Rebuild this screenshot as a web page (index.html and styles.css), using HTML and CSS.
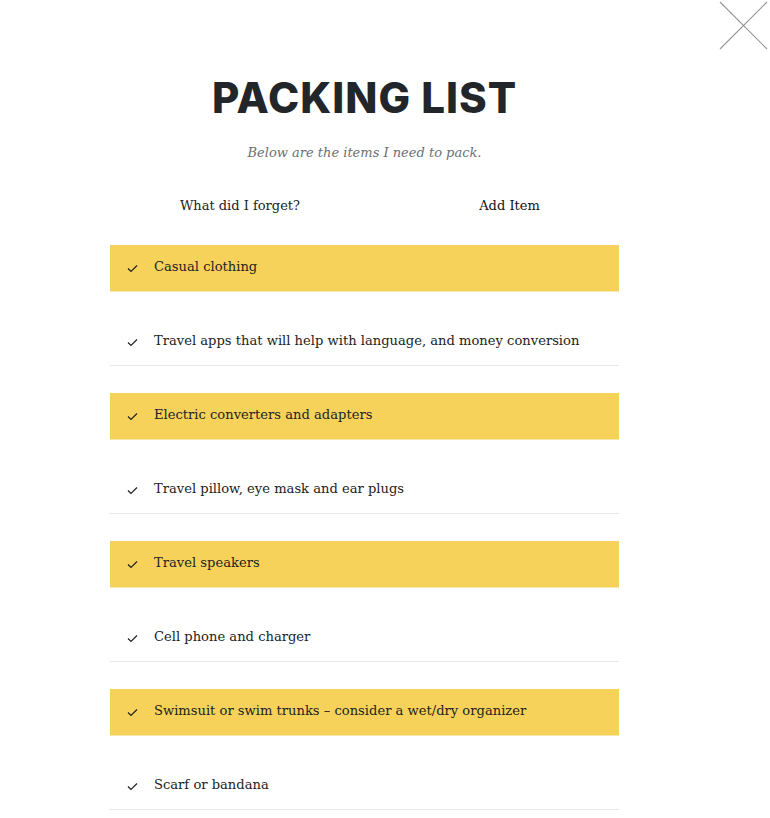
FILE: index.html
```html
<!DOCTYPE html>
<html>
<head>
<meta charset="utf-8">
<link rel="stylesheet" href="styles.css">
</head>
<body>
<button class="close" aria-label="Close">
  <svg width="50" height="52" viewBox="0 0 50 52"><path d="M1 2 L48 49 M48 2 L1 49" stroke="#999" stroke-width="1.2" fill="none"/></svg>
</button>
<main class="wrap">
  <h1 class="title">PACKING LIST</h1>
  <p class="sub">Below are the items I need to pack.</p>
  <form class="form">
    <input class="field" type="text" placeholder="What did I forget?">
    <button class="add" type="button">Add Item</button>
  </form>
  <ul class="list">
    <li class="item done"><svg class="chk" width="11" height="9" viewBox="0 0 11 9"><path d="M1 4.5 L4 7.5 L10 1.5" stroke="#222" stroke-width="1.2" fill="none"/></svg><span>Casual clothing</span></li>
    <li class="item"><svg class="chk" width="11" height="9" viewBox="0 0 11 9"><path d="M1 4.5 L4 7.5 L10 1.5" stroke="#222" stroke-width="1.2" fill="none"/></svg><span>Travel apps that will help with language, and money conversion</span></li>
    <li class="item done"><svg class="chk" width="11" height="9" viewBox="0 0 11 9"><path d="M1 4.5 L4 7.5 L10 1.5" stroke="#222" stroke-width="1.2" fill="none"/></svg><span>Electric converters and adapters</span></li>
    <li class="item"><svg class="chk" width="11" height="9" viewBox="0 0 11 9"><path d="M1 4.5 L4 7.5 L10 1.5" stroke="#222" stroke-width="1.2" fill="none"/></svg><span>Travel pillow, eye mask and ear plugs</span></li>
    <li class="item done"><svg class="chk" width="11" height="9" viewBox="0 0 11 9"><path d="M1 4.5 L4 7.5 L10 1.5" stroke="#222" stroke-width="1.2" fill="none"/></svg><span>Travel speakers</span></li>
    <li class="item"><svg class="chk" width="11" height="9" viewBox="0 0 11 9"><path d="M1 4.5 L4 7.5 L10 1.5" stroke="#222" stroke-width="1.2" fill="none"/></svg><span>Cell phone and charger</span></li>
    <li class="item done"><svg class="chk" width="11" height="9" viewBox="0 0 11 9"><path d="M1 4.5 L4 7.5 L10 1.5" stroke="#222" stroke-width="1.2" fill="none"/></svg><span>Swimsuit or swim trunks – consider a wet/dry organizer</span></li>
    <li class="item"><svg class="chk" width="11" height="9" viewBox="0 0 11 9"><path d="M1 4.5 L4 7.5 L10 1.5" stroke="#222" stroke-width="1.2" fill="none"/></svg><span>Scarf or bandana</span></li>
  </ul>
</main>
</body>
</html>
```

FILE: styles.css
```css
html, body {
  margin: 0;
  padding: 0;
  background: #fff;
  font-family: "DejaVu Serif", serif;
  color: #222;
  overflow: hidden;
}
.close {
  position: absolute;
  top: 0;
  right: 1px;
  border: 0;
  background: none;
  padding: 0;
  line-height: 0;
}
.wrap {
  width: 509px;
  margin: 0 0 0 110px;
  padding-top: 73px;
}
.title {
  margin: 0;
  text-align: center;
  font-family: Inter, "Open Sans", sans-serif;
  font-weight: 800;
  font-size: 42px;
  line-height: 50px;
  letter-spacing: 1px;
  color: #222529;
}
.sub {
  margin: 20px 0 0;
  text-align: center;
  font-style: italic;
  font-size: 13px;
  line-height: 20px;
  color: #6b6f75;
}
.form {
  display: flex;
  margin-top: 30px;
  height: 24px;
  align-items: center;
}
.field {
  width: 260px;
  border: 0;
  outline: none;
  padding: 0;
  text-align: center;
  font-family: "DejaVu Serif", serif;
  font-size: 13px;
  color: #222;
  background: none;
}
.field::placeholder { color: #222; opacity: 1; }
.add {
  margin-left: 30px;
  width: 219px;
  border: 0;
  background: none;
  padding: 0;
  font-family: "DejaVu Serif", serif;
  font-size: 13px;
  color: #111;
}
.list {
  list-style: none;
  margin: 28px 0 0;
  padding: 0;
  display: flex;
  flex-direction: column;
  gap: 27px;
}
.item {
  box-sizing: border-box;
  height: 47px;
  display: flex;
  align-items: center;
  padding: 0 0 4px 17px;
  border-bottom: 1px solid #e6e6e6;
  font-size: 13.1px;
}
.item.done {
  background: #f6d25b;
  border-bottom-color: #f8e6b0;
}
.chk {
  margin-right: 16px;
  margin-top: 4px;
  flex: none;
}
```
